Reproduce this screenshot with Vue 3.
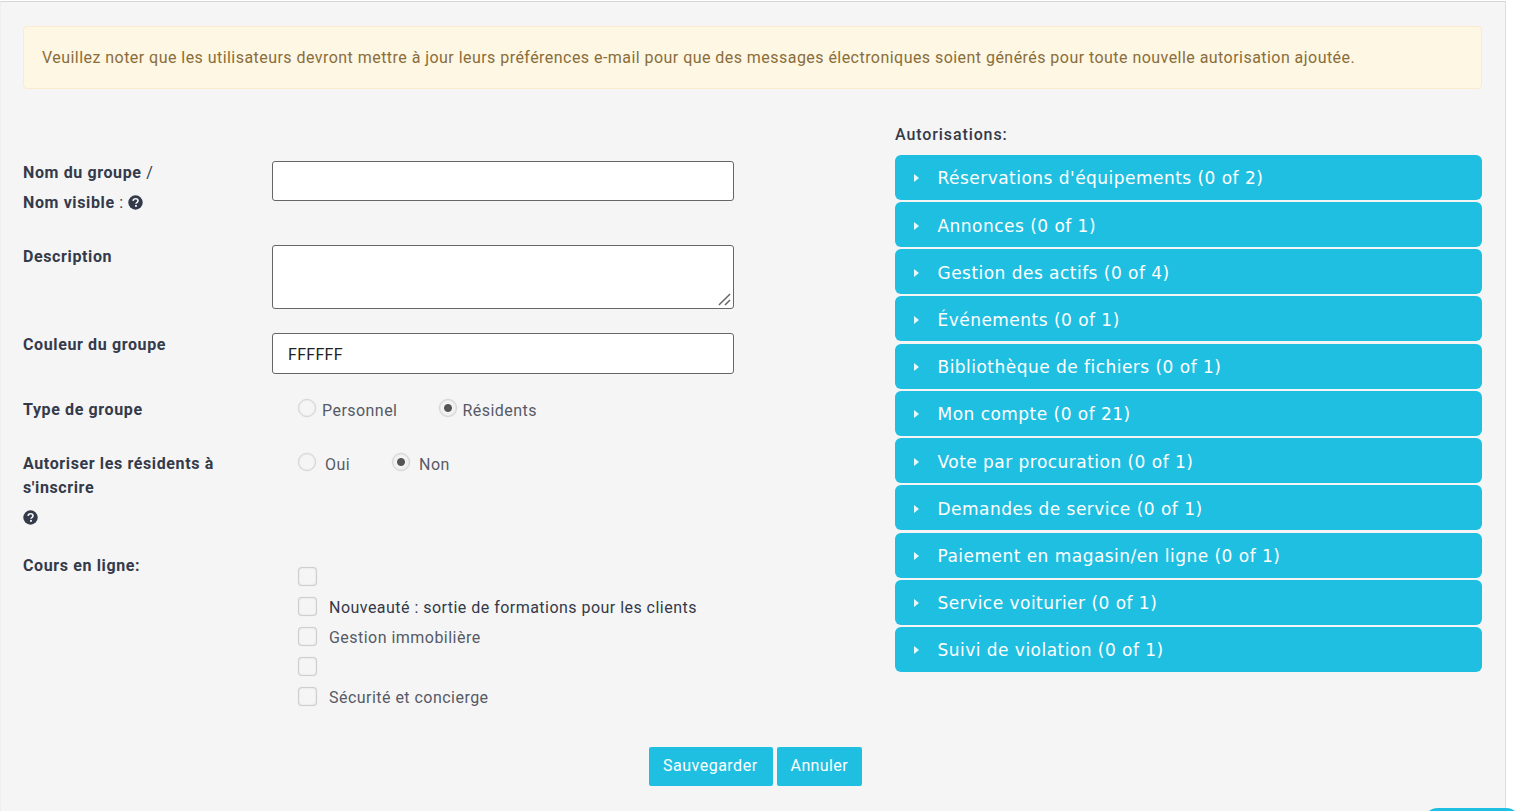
<script setup>
const perms = [
  "Réservations d'équipements (0 of 2)",
  'Annonces (0 of 1)',
  'Gestion des actifs (0 of 4)',
  'Événements (0 of 1)',
  'Bibliothèque de fichiers (0 of 1)',
  'Mon compte (0 of 21)',
  'Vote par procuration (0 of 1)',
  'Demandes de service (0 of 1)',
  'Paiement en magasin/en ligne (0 of 1)',
  'Service voiturier (0 of 1)',
  'Suivi de violation (0 of 1)'
]
const courses = ['', 'Nouveauté : sortie de formations pour les clients', 'Gestion immobilière', '', 'Sécurité et concierge']
</script>

<template>
  <div class="page">
    <div class="alert">Veuillez noter que les utilisateurs devront mettre à jour leurs préférences e-mail pour que des messages électroniques soient générés pour toute nouvelle autorisation ajoutée.</div>
    <div class="columns">
      <form class="form">
        <div class="row row-name">
          <label class="label">Nom du groupe <span class="thin">/</span><br />Nom visible <span class="thin">:</span> <svg class="help" viewBox="0 0 16 16"><circle cx="8" cy="8" r="7.7" fill="#343a4a" /><path d="M5.4 6.3c.2-1.5 1.3-2.3 2.7-2.3 1.5 0 2.6.9 2.6 2.2 0 2-2.2 1.8-2.2 3.2" fill="none" stroke="#f5f5f5" stroke-width="1.8" /><rect x="7.5" y="10.6" width="2" height="2" fill="#f5f5f5" /></svg></label>
          <input class="input" type="text" />
        </div>
        <div class="row row-desc">
          <label class="label">Description</label>
          <div class="area-wrap">
            <textarea class="input area"></textarea>
            <svg class="grip" viewBox="0 0 14 14"><path d="M1 13 13 1M7.5 13 13 7.5" stroke="#666" stroke-width="1.6" fill="none" /></svg>
          </div>
        </div>
        <div class="row row-color">
          <label class="label">Couleur du groupe</label>
          <input class="input color" type="text" value="FFFFFF" />
        </div>
        <div class="row row-type">
          <label class="label">Type de groupe</label>
          <div class="options">
            <span class="radio"></span><span class="opt first">Personnel</span>
            <span class="radio on"></span><span class="opt second">Résidents</span>
          </div>
        </div>
        <div class="row row-allow">
          <label class="label">Autoriser les résidents à<br />s'inscrire<span class="help-line"><svg class="help" viewBox="0 0 16 16"><circle cx="8" cy="8" r="7.7" fill="#343a4a" /><path d="M5.4 6.3c.2-1.5 1.3-2.3 2.7-2.3 1.5 0 2.6.9 2.6 2.2 0 2-2.2 1.8-2.2 3.2" fill="none" stroke="#f5f5f5" stroke-width="1.8" /><rect x="7.5" y="10.6" width="2" height="2" fill="#f5f5f5" /></svg></span></label>
          <div class="options">
            <span class="radio"></span><span class="opt oui">Oui</span>
            <span class="radio on"></span><span class="opt non">Non</span>
          </div>
        </div>
        <div class="row row-courses">
          <label class="label">Cours en ligne:</label>
          <div class="checks">
            <div v-for="(c, i) in courses" :key="i" class="check"><span class="box"></span><span class="check-text" :class="{ dark: i === 1 }">{{ c }}</span></div>
          </div>
        </div>
        <div class="actions">
          <button type="button" class="btn save">Sauvegarder</button>
          <button type="button" class="btn">Annuler</button>
        </div>
      </form>
      <aside class="perms">
        <div class="perms-title">Autorisations:</div>
        <div class="accordion">
          <div v-for="p in perms" :key="p" class="item"><span class="caret"></span><span class="item-text">{{ p }}</span></div>
        </div>
      </aside>
    </div>
    <div class="pill"></div>
  </div>
</template>

<style>
html, body { margin: 0; background: #fff; overflow: hidden; }
</style>

<style scoped>
.page {
  box-sizing: border-box;
  width: 1506px;
  height: 810px;
  margin-top: 1px;
  background: #f5f5f5;
  border-top: 1px solid #d6d6d6;
  border-right: 1px solid #dedede;
  border-left: 1px solid #eeeeee;
  padding: 24px 23px 0 22px;
  font-family: Roboto, "Liberation Sans", sans-serif;
  font-size: 16px;
  letter-spacing: 0.455px;
  color: #343a4a;
}
.alert {
  box-sizing: border-box;
  height: 63px;
  display: flex;
  align-items: center;
  padding: 0 18px;
  background: #fdf7e3;
  border: 1px solid #faebcc;
  border-radius: 4px;
  color: #8a6d3b;
}
.columns { display: flex; }
.form { width: 872px; flex: none; padding-top: 72px; }
.row { display: flex; }
.label { width: 249px; flex: none; display: block; font-weight: 700; line-height: 24px; font-size: 16px; letter-spacing: 0.62px; }
.thin { font-weight: 400; }
.input {
  box-sizing: border-box;
  width: 462px;
  height: 40px;
  margin: 0;
  background: #fff;
  border: 1px solid #666;
  border-radius: 3px;
  font: 16px Roboto, sans-serif;
  letter-spacing: 0.3px;
  color: #222;
  padding: 1px 15px 0;
  display: block;
}
.row-name { height: 84px; }
.row-name .label { line-height: 30px; margin-top: -3px; }
.row-desc { height: 88px; }
.area-wrap { position: relative; height: 64px; }
.area { height: 64px; resize: none; }
.grip { position: absolute; right: 3px; bottom: 3px; width: 13px; height: 13px; }
.row-color { height: 65px; }
.color { height: 41px; }
.row-type { height: 54px; }
.row-allow { height: 102px; }
.help { width: 15px; height: 15px; vertical-align: -2px; }
.help-line { display: block; line-height: 30px; padding-top: 3px; height: 27px; }
.options { display: flex; align-items: center; height: 24px; padding-left: 26px; color: #555a66; }
.radio {
  box-sizing: border-box;
  width: 18px;
  height: 18px;
  border-radius: 50%;
  border: 1px solid #d4d4d4;
  background: radial-gradient(circle, #f5f5f5 55%, #e2e2e2 100%);
  box-shadow: 0 0 1px #cfcfcf;
  flex: none;
  margin-top: -4px;
}
.radio.on { background: radial-gradient(circle, #555 0 3.5px, #f5f5f5 4.5px, #e2e2e2 100%); }
.opt { margin-left: 6px; }
.first { margin-right: 42px; }
.opt.second { margin-left: 5px; }
.opt.oui { margin-left: 9px; margin-right: 42px; }
.opt.non { margin-left: 9px; }
.checks { padding: 8px 0 0 26px; }
.row-courses { height: 193px; }
.check { display: flex; align-items: center; height: 30px; }
.box {
  box-sizing: border-box;
  width: 19px;
  height: 19px;
  margin-top: -1px;
  border: 1px solid #cfcfcf;
  border-radius: 4px;
  background: #f5f5f5;
  box-shadow: 0 0 1px #d0d0d0, inset 0 0 2px #dedede;
  flex: none;
}
.check-text { margin-left: 12px; color: #555a66; letter-spacing: 0.47px; }
.check-text.dark { color: #343a4a; }
.actions { display: flex; gap: 4px; padding-left: 626px; }
.btn {
  box-sizing: border-box;
  height: 39px;
  padding: 0 14px 2px 14px;
  border: 0;
  border-radius: 2px;
  background: #1fbfe2;
  color: #fff;
  font: 16px Roboto, sans-serif;
  letter-spacing: 0.4px;
}
.save { padding-right: 15px; letter-spacing: 0.5px; }
.perms { width: 587px; flex: none; padding-top: 34px; }
.perms-title { font-weight: 500; line-height: 24px; height: 31.8px; letter-spacing: 0.9px; }
.accordion { display: grid; row-gap: 2.22px; }
.item {
  box-sizing: border-box;
  height: 45px;
  display: flex;
  align-items: center;
  padding: 2px 0 0 19px;
  background: #1fbfe2;
  border-radius: 6px;
  color: #fff;
  font-family: "DejaVu Sans", sans-serif;
  font-size: 17px;
  letter-spacing: 0.47px;
}
.caret {
  width: 0;
  height: 0;
  border-left: 5px solid #e8f8fc;
  border-top: 4px solid transparent;
  border-bottom: 4px solid transparent;
  margin-right: 18.5px;
}
.pill {
  position: absolute;
  left: 1423px;
  top: 808px;
  width: 98px;
  height: 30px;
  border-radius: 15px;
  background: #1fbfe2;
}
</style>
